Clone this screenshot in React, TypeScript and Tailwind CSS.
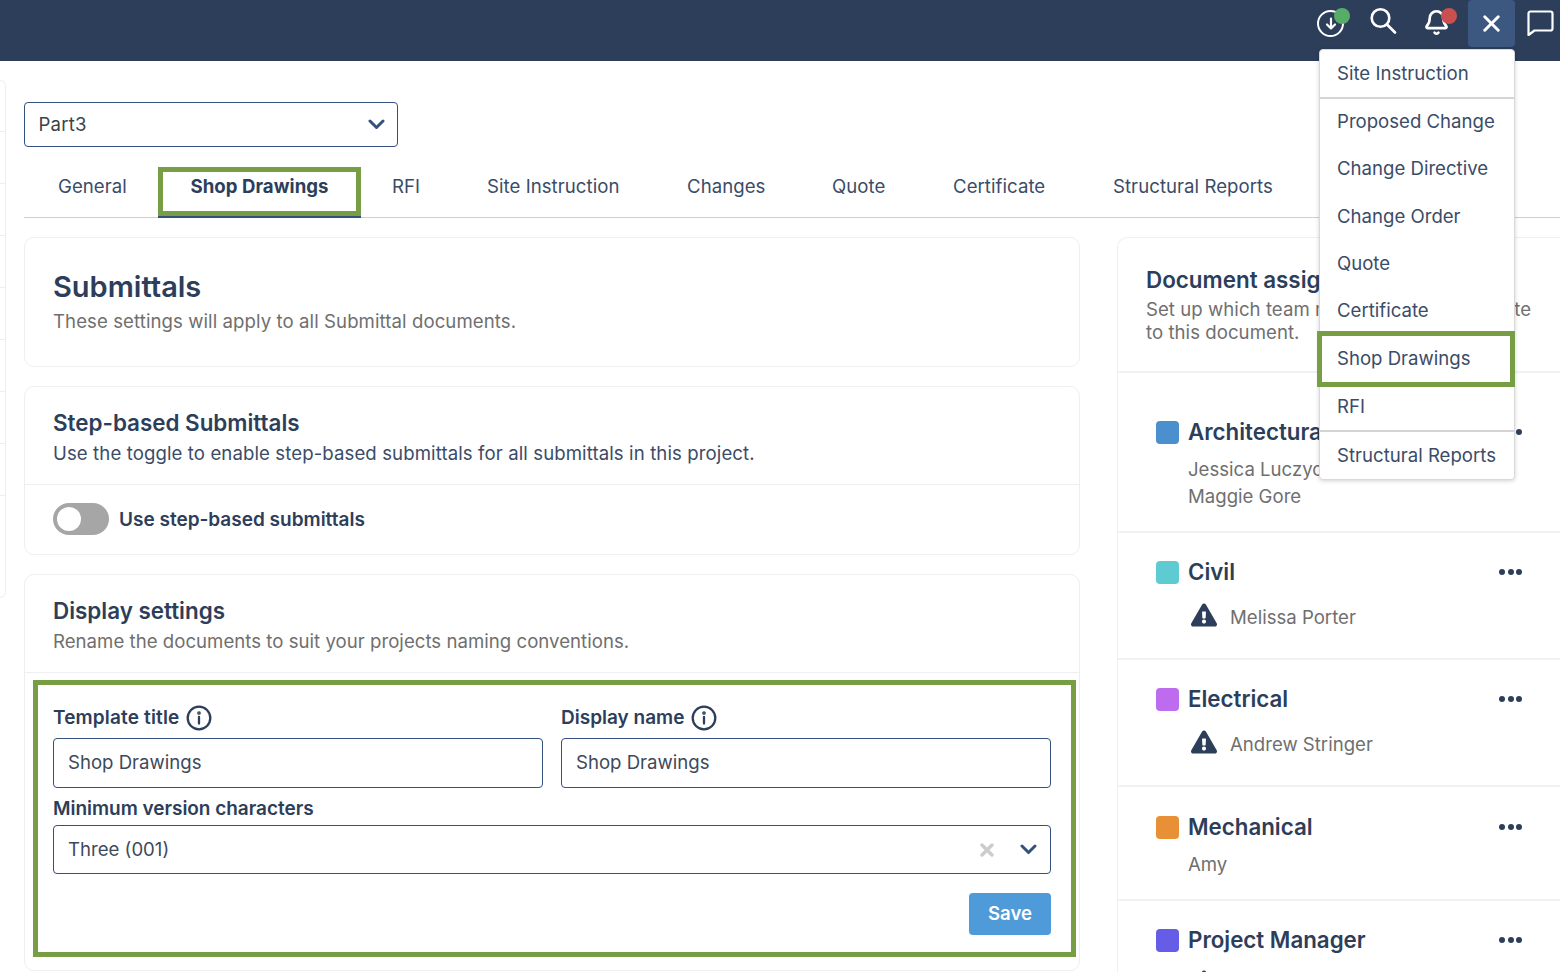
import React from "react";
import { Bell, X } from "lucide-react";
import { FaExclamationTriangle } from "react-icons/fa";

const menu: [string, string][] = [
  ["Site Instruction", "h-[48px] border-b-2 border-[#d4d4d4]"],
  ["Proposed Change", "h-[46.5px]"],
  ["Change Directive", "h-[47.5px]"],
  ["Change Order", "h-[47.5px]"],
  ["Quote", "h-[47px]"],
  ["Certificate", "h-[46px]"],
  ["Shop Drawings", "h-[51px]"],
  ["RFI", "h-[47.5px] border-b-2 border-[#d4d4d4]"],
  ["Structural Reports", "h-[47px]"],
];

function Dots() {
  return (
    <span className="flex gap-[2.5px]">
      <span className="w-[6px] h-[6px] rounded-full bg-[#2c3e5a]" />
      <span className="w-[6px] h-[6px] rounded-full bg-[#2c3e5a]" />
      <span className="w-[6px] h-[6px] rounded-full bg-[#2c3e5a]" />
    </span>
  );
}

function Chevron() {
  return (
    <svg width="17" height="11" viewBox="0 0 17 11" fill="none" stroke="#34507c" strokeWidth="3" strokeLinecap="round" strokeLinejoin="round">
      <path d="M2 2l6.500 6.500L15 2" />
    </svg>
  );
}

function InfoIcon() {
  return (
    <svg width="26" height="26" viewBox="0 0 26 26" fill="none" stroke="#2c3e5a" strokeWidth="2.300" strokeLinecap="round">
      <circle cx="13" cy="13" r="11.300" />
      <path d="M13 12v6.500" />
      <circle cx="13" cy="8" r="0.700" />
    </svg>
  );
}

function Team({ color, name, people, warn, h, mt }: { color: string; name: string; people: string[]; warn?: boolean; h: string; mt: string }) {
  return (
    <div className={`border-b-2 border-[#f0f1f5] pl-[38px] pr-[38px] ${h}`}>
      <div className="flex items-center justify-between">
        <div className="flex items-center gap-[9px]">
          <span className={`w-[23px] h-[23px] rounded-[4px] ${color}`} />
          <span className="text-[22.3px] font-semibold leading-[30px] text-[#2c3e5a]">{name}</span>
        </div>
        <Dots />
      </div>
      <div className={`pl-[32px] text-[18.6px] leading-[27px] text-[#6f6f6f] ${mt}`}>
        {warn ? (
          <div className="flex items-center gap-[13px] pl-[3px]">
            <FaExclamationTriangle className="text-[#2c3e5a] -translate-y-[3px]" size={26} />
            {people[0] ? <span>{people[0]}</span> : null}
          </div>
        ) : (
          people.map((p) => <div key={p}>{p}</div>)
        )}
      </div>
    </div>
  );
}

function Field({ label, value, tracking }: { label: string; value: string; tracking: string }) {
  return (
    <div className="flex-1">
      <div className="flex items-center gap-[7px] h-[26px]">
        <span className={`text-[19px] font-semibold text-[#2c3e5a] ${tracking}`}>{label}</span>
        <InfoIcon />
      </div>
      <div className="mt-[7px] h-[50px] border border-[#34507c] rounded-[4px] flex items-center px-[14px] text-[18.6px] text-[#3d4a5c]">{value}</div>
    </div>
  );
}

export default function App() {
  return (
    <div className="relative w-[1560px] h-[972px] overflow-hidden bg-white font-['Inter',sans-serif] text-[#2c3e5a]">
      <header className="h-[61px] bg-[#2c3e5a] flex justify-end items-start relative">
        <div className="relative w-[27px] h-[27px] mt-[10px] mr-[25px] rounded-full border-[2.500px] border-white flex items-center justify-center">
          <svg width="16" height="16" viewBox="0 0 16 16" fill="none" stroke="white" strokeWidth="2.200" strokeLinecap="round" strokeLinejoin="round"><path d="M8 2.500v10M4 8.500l4 4 4-4" /></svg>
          <span className="absolute top-[-4px] left-[15px] w-[16px] h-[16px] rounded-full bg-[#57ad68]" />
        </div>
        <svg className="mt-[7px] mr-[26px]" width="28" height="27" viewBox="0 0 28 27" fill="none" stroke="white" strokeWidth="2.600" strokeLinecap="round">
          <circle cx="11.500" cy="11" r="8.800" />
          <path d="M18 17.500l8 8" />
        </svg>
        <div className="relative mt-[9px] mr-[18px]">
          <Bell size={27} strokeWidth={2.300} className="text-white" />
          <span className="absolute top-[-1px] left-[18px] w-[16px] h-[16px] rounded-full bg-[#c9504f]" />
        </div>
        <div className="w-[47px] h-[47px] bg-[#3c5780] rounded-[4px] flex items-center justify-center mr-[12px]">
          <X size={27} strokeWidth={2.600} className="text-white" />
        </div>
        <svg className="mt-[10px] mr-[6px]" width="27" height="26" viewBox="0 0 27 26" fill="none" stroke="white" strokeWidth="2.200" strokeLinejoin="round">
          <path d="M1.500 3.500a2 2 0 0 1 2-2h20a2 2 0 0 1 2 2v15a2 2 0 0 1-2 2H7.500l-6 4.500z" />
        </svg>
      </header>

      <div className="flex">
        <aside className="w-[6px] h-[518px] mt-[19px] border border-l-0 border-[#eeeff3] rounded-r-[8px] flex flex-col pt-[50px] gap-[51px]">
          {[0, 1, 2, 3, 4, 5, 6, 7].map((i) => <div key={i} className="h-px bg-[#eeeff3]" />)}
        </aside>

        <main className="ml-[18px] flex-1 min-w-0">
          <div className="mt-[41px] w-[374px] h-[45px] border border-[#34507c] rounded-[4px] flex items-center justify-between pl-[13.500px] pr-[12px] text-[18.6px] tracking-[0.2px] text-[#3d4248]">
            <span>Part3</span>
            <Chevron />
          </div>

          <nav className="mt-[20px] h-[51px] border-b border-[#cfcfcf] flex text-[18.6px] tracking-[0.05px] text-[#3a4c68]">
            <div className="w-[134px] pl-[34px] pt-[6px]">General</div>
            <div className="relative w-[203px] h-[51px] text-center pt-[6px] font-bold text-[#2c3e5a] border-b-2 border-[#34507c]">
              Shop Drawings
              <span className="absolute left-0 top-0 w-[203px] h-[49px] border-[5px] border-[#779e45]" />
            </div>
            <div className="w-[126px] pl-[31px] pt-[6px]">RFI</div>
            <div className="w-[200px] pt-[6px]">Site Instruction</div>
            <div className="w-[145px] pt-[6px]">Changes</div>
            <div className="w-[121px] pt-[6px]">Quote</div>
            <div className="w-[160px] pt-[6px]">Certificate</div>
            <div className="pt-[6px]">Structural Reports</div>
          </nav>

          <div className="mt-[19px] flex gap-[37px]">
            <div className="w-[1056px] shrink-0 flex flex-col gap-[19px]">
              <section className="h-[130px] border border-[#eeeff3] rounded-[10px] px-[28px] pt-[31px]">
                <h1 className="text-[29px] font-semibold leading-[36px] text-[#2c3e5a]">Submittals</h1>
                <p className="mt-[3px] text-[18.6px] leading-[27px] tracking-[0.08px] text-[#6f6f6f]">These settings will apply to all Submittal documents.</p>
              </section>

              <section className="h-[169px] border border-[#eeeff3] rounded-[10px]">
                <div className="h-[98px] border-b border-[#eeeff3] px-[28px] pt-[21px]">
                  <h2 className="text-[22.4px] font-semibold leading-[30px] text-[#2c3e5a]">Step-based Submittals</h2>
                  <p className="mt-[2px] text-[18.6px] leading-[27px] tracking-[0.1px] text-[#3a4c68]">Use the toggle to enable step-based submittals for all submittals in this project.</p>
                </div>
                <div className="flex items-center gap-[10px] px-[28px] pt-[18px]">
                  <span className="relative w-[56px] h-[32px] rounded-full bg-[#a6a6a6] block">
                    <span className="absolute left-[4px] top-[4px] w-[24px] h-[24px] rounded-full bg-white" />
                  </span>
                  <span className="text-[19px] font-semibold pt-[2px] text-[#2c3e5a]">Use step-based submittals</span>
                </div>
              </section>

              <section className="h-[397px] border border-[#eeeff3] rounded-[10px]">
                <div className="h-[98px] border-b border-[#eeeff3] px-[28px] pt-[21px]">
                  <h2 className="text-[22.4px] font-semibold leading-[30px] text-[#2c3e5a]">Display settings</h2>
                  <p className="mt-[2px] text-[18.6px] leading-[27px] tracking-[0.03px] text-[#6f6f6f]">Rename the documents to suit your projects naming conventions.</p>
                </div>
                <div className="relative px-[28px] pt-[32px]">
                  <div className="flex gap-[18px]">
                    <Field label="Template title" value="Shop Drawings" tracking="tracking-[0.15px]" />
                    <Field label="Display name" value="Shop Drawings" tracking="tracking-normal" />
                  </div>
                  <div className="mt-[8px] text-[19px] font-semibold leading-[26px] tracking-[-0.03px] text-[#2c3e5a]">Minimum version characters</div>
                  <div className="mt-[3px] h-[49px] border border-[#34507c] rounded-[4px] flex items-center justify-between pl-[14px] pr-[13px] text-[18.6px] text-[#3d4a5c]">
                    <span>Three (001)</span>
                    <span className="flex items-center gap-[26px]">
                      <svg width="14" height="14" viewBox="0 0 14 14" fill="none" stroke="#cccccc" strokeWidth="3.400" strokeLinecap="round"><path d="M2 2l10 10M12 2L2 12" /></svg>
                      <Chevron />
                    </span>
                  </div>
                  <div className="mt-[19px] flex justify-end">
                    <button className="w-[82px] h-[42px] bg-[#4f9ad8] rounded-[4px] text-white text-[18.6px] font-semibold">Save</button>
                  </div>
                  <span className="absolute left-[8px] top-[7px] w-[1043px] h-[277px] border-[5px] border-[#779e45]" />
                </div>
              </section>
            </div>

            <div className="flex-1 min-w-0 border border-r-0 border-b-0 border-[#eeeff3] rounded-tl-[10px] h-[760px]">
              <div className="h-[135px] border-b-2 border-[#f0f1f5] pl-[28px] pt-[27px] whitespace-nowrap">
                <h2 className="text-[22.4px] font-semibold leading-[30px] text-[#2c3e5a]">Document assignments</h2>
                <p className="mt-[3px] text-[18.6px] leading-[23px] tracking-[0.05px] text-[#6f6f6f]">Set up which team members can contribute<br />to this document.</p>
              </div>
              <Team h="h-[160px] pt-[44px]" mt="mt-[9px]" color="bg-[#4a90cf]" name="Architectural" people={["Jessica Luczycka", "Maggie Gore"]} />
              <Team h="h-[127px] pt-[24px]" mt="mt-[17px]" color="bg-[#5ecbd3]" name="Civil" people={["Melissa Porter"]} warn />
              <Team h="h-[127px] pt-[24px]" mt="mt-[17px]" color="bg-[#bd6cf0]" name="Electrical" people={["Andrew Stringer"]} warn />
              <Team h="h-[114px] pt-[25px]" mt="mt-[9px]" color="bg-[#e89035]" name="Mechanical" people={["Amy"]} />
              <Team h="h-[100px] pt-[24px]" mt="mt-[17px]" color="bg-[#655ce8]" name="Project Manager" people={[]} warn />
            </div>
          </div>
        </main>
      </div>

      <div className="absolute left-[1319px] top-[49px] w-[196px] h-[431px] bg-white border border-[#d9d9d9] rounded-[4px] shadow-[0_1px_4px_rgba(0,0,0,0.18)] pt-[1px] text-[18.6px] text-[#3a4c68] flex flex-col">
        {menu.map(([m, cls]) => (
          <div key={m} className={`shrink-0 pl-[17px] flex items-center ${cls}`}>{m}</div>
        ))}
        <span className="absolute left-[-3px] top-[281px] w-[198px] h-[56px] border-[5px] border-[#779e45]" />
      </div>
    </div>
  );
}
